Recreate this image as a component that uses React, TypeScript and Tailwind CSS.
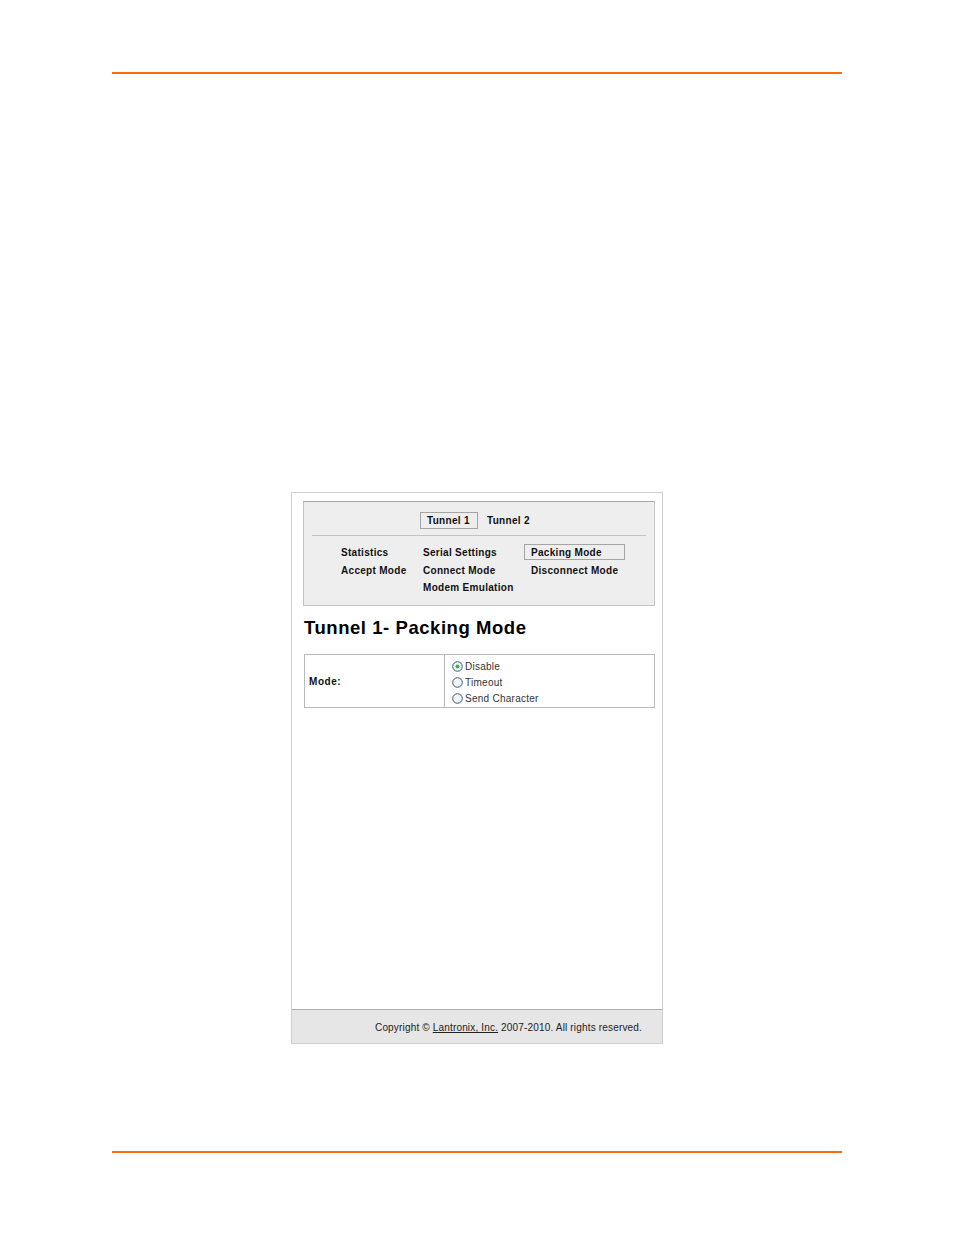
export default function App() {
  const navFont = "text-[10px] font-bold tracking-[0.3px] text-[#111]";
  return (
    <div className="w-[954px] h-[1235px] bg-white pt-[72px] px-[112px] font-['Liberation_Sans',Arial,sans-serif] overflow-hidden">
      <div className="h-[2px] bg-[#ff6a0d]" />
      <div className="mt-[418px] ml-[179px] w-[372px] h-[552px] border border-[#cfcfcf] flex flex-col">
        <div className="flex-1 pl-[11px] pr-[7px] pt-[8px]">
          <div className="h-[105px] bg-[#eeeeee] border border-[#c4c4c4] border-t-[#a8a8a8] border-r-[#c8c8c8] px-[8px] pt-[10px]">
            <div className="flex items-start pl-[108px] h-[23px]">
              <span className={`${navFont} h-[17px] leading-[15px] w-[58px] pl-[6px] border border-[#a5a5a5]`}>Tunnel 1</span>
              <span className={`${navFont} ml-[9px] h-[17px] leading-[17px]`}>Tunnel 2</span>
            </div>
            <div className="h-px bg-[#c9c3b6]" />
            <div className="grid grid-cols-[82px_101px_auto] pl-[29px] pt-[8px]">
              <span className={`${navFont} leading-[17.5px]`}>Statistics</span>
              <span className={`${navFont} leading-[17.5px]`}>Serial Settings</span>
              <span className={`${navFont} w-[101px] h-[16px] leading-[15px] pl-[6px] border border-[#a5a5a5]`}>Packing Mode</span>
              <span className={`${navFont} leading-[17.5px]`}>Accept Mode</span>
              <span className={`${navFont} leading-[17.5px]`}>Connect Mode</span>
              <span className={`${navFont} leading-[17.5px] pl-[7px]`}>Disconnect Mode</span>
              <span />
              <span className={`${navFont} leading-[17.5px]`}>Modem Emulation</span>
            </div>
          </div>
          <h1 className="mt-[10px] ml-px text-[18.5px] leading-[24px] font-bold tracking-[0.55px] text-black">Tunnel 1- Packing Mode</h1>
          <div className="mt-[14px] ml-px h-[54px] w-[351px] border border-[#b9b9b9] flex">
            <div className="w-[140px] border-r border-[#b9b9b9] flex items-center pl-[4px] text-[10px] font-bold tracking-[0.55px] text-[#111]">Mode:</div>
            <div className="flex-1 pl-[7px] pt-[3px] flex flex-col">
              {[
                ["Disable", true],
                ["Timeout", false],
                ["Send Character", false],
              ].map(([label, on]) => (
                <div key={label as string} className="h-[16px] flex items-center">
                  <svg width="11" height="11" viewBox="0 0 11 11" className="shrink-0">
                    <circle cx="5.5" cy="5.5" r="4.8" fill="#f4f4f4" stroke="#2f5f85" strokeWidth="1" />
                    {on ? <circle cx="5.5" cy="5.5" r="2" fill="#3fae4a" /> : null}
                  </svg>
                  <span className="ml-[2px] text-[10px] tracking-[0.26px] text-[#333]">{label as string}</span>
                </div>
              ))}
            </div>
          </div>
        </div>
        <div className="h-[34px] bg-[#e6e6e6] border-t border-[#aeaeae] flex items-center justify-end pr-[20px] pt-[2px] text-[10px] tracking-[0.17px] text-[#222]">
          <span>
            Copyright © <span className="underline">Lantronix, Inc.</span> 2007-2010. All rights reserved.
          </span>
        </div>
      </div>
      <div className="mt-[107px] h-[2px] bg-[#ff6a0d]" />
    </div>
  );
}
